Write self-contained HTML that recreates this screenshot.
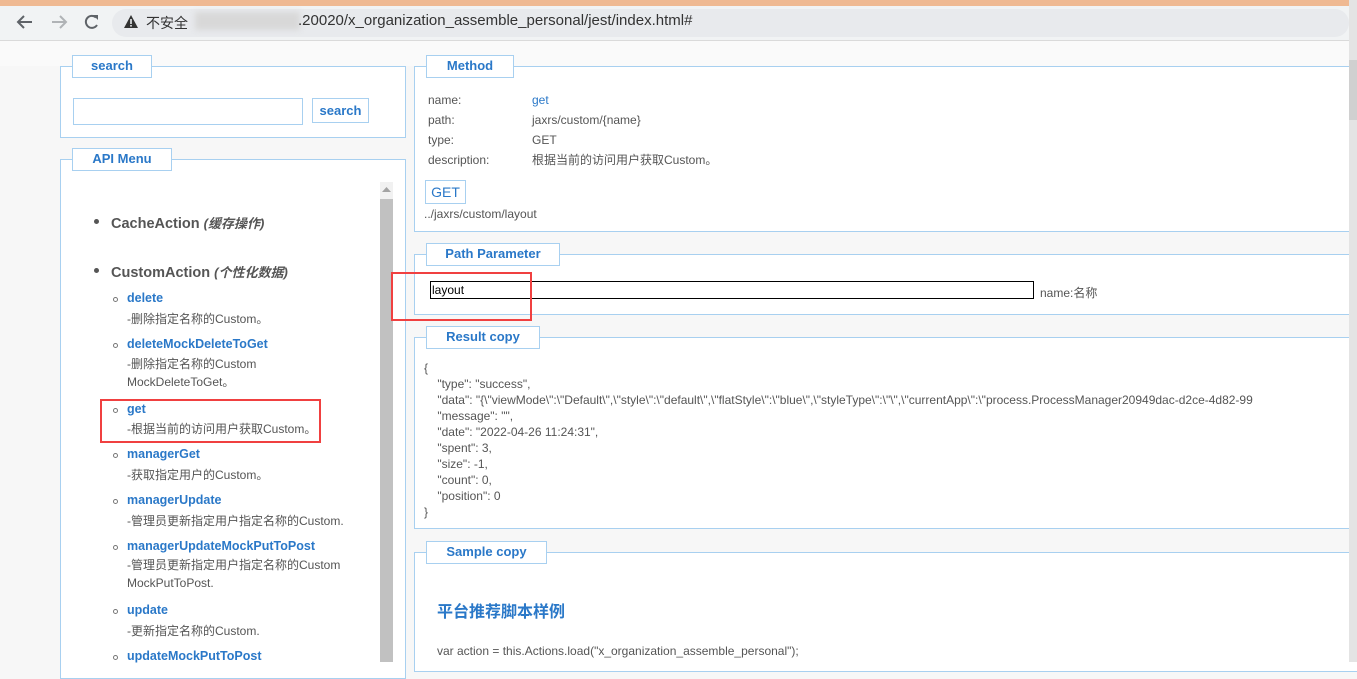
<!DOCTYPE html>
<html><head><meta charset="utf-8"><style>
*{margin:0;padding:0;box-sizing:border-box}
body{width:1357px;height:662px;overflow:hidden;background:#f7f7f7;font-family:"Liberation Sans","Noto Sans CJK SC",sans-serif;font-size:12px;color:#555;position:relative}
.a{position:absolute}
.fs{position:absolute;border:1px solid #a8d0f0;background:#fff}
.lg{position:absolute;border:1px solid #a8d0f0;background:#fff;color:#2a78c8;font-weight:bold;font-size:13px;text-align:center;line-height:20px}
.blue{color:#2a78c8}
.lnk{color:#2a78c8;font-weight:bold;font-size:12.5px}
.d{color:#555;font-size:12px}
.bul{position:absolute;width:5px;height:5px;border:1px solid #777;border-radius:50%}
</style></head><body>
<div class="a" style="left:0;top:0;width:1349px;height:6px;background:#efb992"></div>
<div class="a" style="left:0;top:6px;width:1349px;height:34px;background:#f1f3f4"></div>
<div class="a" style="left:0;top:40px;width:1349px;height:1px;background:#dadada"></div>
<svg class="a" style="left:14px;top:12px" width="100" height="20" viewBox="0 0 100 20"><path d="M18 10H5M10 4L4 10l6 6" stroke="#5f6368" stroke-width="2" fill="none"/><path d="M38 10h13M46 4l6 6-6 6" stroke="#b0b3b6" stroke-width="2" fill="none"/><path d="M82 5.5A6 6 0 1 0 83 13" stroke="#5f6368" stroke-width="2" fill="none"/><path d="M79 3h5v5z" fill="#5f6368"/></svg>
<div class="a" style="left:112px;top:9px;width:1237px;height:28px;background:#e8eaed;border-radius:14px"></div>
<svg class="a" style="left:124px;top:15px" width="14" height="13"><path d="M7 0L14 13H0z" fill="#333"/><rect x="6.2" y="4" width="1.6" height="5" fill="#e8eaed"/><rect x="6.2" y="10" width="1.6" height="1.6" fill="#e8eaed"/></svg>
<div class="a" style="left:146px;top:13px;font-size:14px;color:#333">不安全</div>
<div class="a" style="left:195px;top:12px;width:105px;height:18px;background:#d8d8d8;filter:blur(3px)"></div>
<div class="a" style="left:298px;top:12px;font-size:15px;color:#333">.20020/x_organization_assemble_personal/jest/index.html#</div>
<div class="a" style="left:0;top:41px;width:1349px;height:25px;background:#fafafa"></div>

<div class="fs" style="left:60px;top:66px;width:346px;height:72px"></div>
<div class="lg" style="left:72px;top:55px;width:80px;height:23px">search</div>
<div class="a" style="left:73px;top:98px;width:230px;height:27px;border:1px solid #a8d0f0;background:#fff"></div>
<div class="lg" style="left:312px;top:98px;width:57px;height:25px;line-height:23px">search</div>

<div class="fs" style="left:60px;top:159px;width:346px;height:520px"></div>
<div class="lg" style="left:72px;top:148px;width:100px;height:23px">API Menu</div>
<div class="a" style="left:380px;top:182px;width:13px;height:480px;background:#f1f1f1"></div>
<div class="a" style="left:380px;top:199px;width:13px;height:463px;background:#c1c1c1"></div>
<svg class="a" style="left:382px;top:187px" width="9" height="6"><path d="M0 5L4.5 0L9 5z" fill="#a3a3a3"/></svg>

<div class="a" style="left:94px;top:219px;width:5px;height:5px;border-radius:50%;background:#555"></div>
<div class="a" style="left:111px;top:213px;font-size:14.5px;font-weight:bold;color:#555">CacheAction <i style="font-size:13px">(缓存操作)</i></div>
<div class="a" style="left:94px;top:268px;width:5px;height:5px;border-radius:50%;background:#555"></div>
<div class="a" style="left:111px;top:262px;font-size:14.5px;font-weight:bold;color:#555">CustomAction <i style="font-size:13px">(个性化数据)</i></div>

<div class="bul" style="left:113px;top:297px"></div><div class="a lnk" style="left:127px;top:291px">delete</div><div class="a d" style="left:127px;top:310px">-删除指定名称的Custom。</div>
<div class="bul" style="left:113px;top:343px"></div><div class="a lnk" style="left:127px;top:337px">deleteMockDeleteToGet</div><div class="a d" style="left:127px;top:355px;line-height:18px">-删除指定名称的Custom<br>MockDeleteToGet。</div>
<div class="bul" style="left:113px;top:408px"></div><div class="a lnk" style="left:127px;top:402px">get</div><div class="a d" style="left:127px;top:420px">-根据当前的访问用户获取Custom。</div>
<div class="a" style="left:100px;top:399px;width:221px;height:44px;border:2px solid #f04040"></div>
<div class="bul" style="left:113px;top:453px"></div><div class="a lnk" style="left:127px;top:447px">managerGet</div><div class="a d" style="left:127px;top:466px">-获取指定用户的Custom。</div>
<div class="bul" style="left:113px;top:499px"></div><div class="a lnk" style="left:127px;top:493px">managerUpdate</div><div class="a d" style="left:127px;top:512px">-管理员更新指定用户指定名称的Custom.</div>
<div class="bul" style="left:113px;top:545px"></div><div class="a lnk" style="left:127px;top:539px">managerUpdateMockPutToPost</div><div class="a d" style="left:127px;top:556px;line-height:18px">-管理员更新指定用户指定名称的Custom<br>MockPutToPost.</div>
<div class="bul" style="left:113px;top:609px"></div><div class="a lnk" style="left:127px;top:603px">update</div><div class="a d" style="left:127px;top:622px">-更新指定名称的Custom.</div>
<div class="bul" style="left:113px;top:655px"></div><div class="a lnk" style="left:127px;top:649px">updateMockPutToPost</div>

<div class="fs" style="left:414px;top:66px;width:960px;height:166px"></div>
<div class="lg" style="left:426px;top:55px;width:88px;height:23px">Method</div>
<div class="a" style="left:428px;top:90px;line-height:20px">name:<br>path:<br>type:<br>description:</div>
<div class="a" style="left:532px;top:90px;line-height:20px"><span class="blue">get</span><br>jaxrs/custom/{name}<br>GET<br>根据当前的访问用户获取Custom。</div>
<div class="a" style="left:425px;top:180px;width:41px;height:24px;border:1px solid #a8d0f0;background:#fff;color:#2a78c8;font-size:14px;text-align:center;line-height:22px">GET</div>
<div class="a" style="left:424px;top:207px">../jaxrs/custom/layout</div>

<div class="fs" style="left:414px;top:254px;width:960px;height:61px"></div>
<div class="lg" style="left:426px;top:243px;width:134px;height:23px">Path Parameter</div>
<div class="a" style="left:430px;top:281px;width:604px;height:18px;border:1px solid #000;background:#fff;color:#000;padding-left:1px;line-height:16px">layout</div>
<div class="a" style="left:1040px;top:284px">name:名称</div>
<div class="a" style="left:391px;top:272px;width:141px;height:49px;border:2px solid #f04040"></div>

<div class="fs" style="left:414px;top:337px;width:960px;height:192px"></div>
<div class="lg" style="left:426px;top:326px;width:114px;height:23px">Result copy</div>
<div class="a" style="left:424px;top:360px;line-height:16px;white-space:pre">{
    "type": "success",
    "data": "{\"viewMode\":\"Default\",\"style\":\"default\",\"flatStyle\":\"blue\",\"styleType\":\"\",\"currentApp\":\"process.ProcessManager20949dac-d2ce-4d82-99
    "message": "",
    "date": "2022-04-26 11:24:31",
    "spent": 3,
    "size": -1,
    "count": 0,
    "position": 0
}</div>

<div class="fs" style="left:414px;top:552px;width:960px;height:120px"></div>
<div class="lg" style="left:426px;top:541px;width:121px;height:23px">Sample copy</div>
<div class="a" style="left:437px;top:598px;font-size:16px;font-weight:bold;color:#2a78c8">平台推荐脚本样例</div>
<div class="a" style="left:437px;top:644px">var action = this.Actions.load("x_organization_assemble_personal");</div>

<div class="a" style="left:1349px;top:0;width:8px;height:662px;background:#e4e4e4"></div>
<div class="a" style="left:1349px;top:60px;width:8px;height:60px;background:#d0d0d0"></div>
</body></html>
